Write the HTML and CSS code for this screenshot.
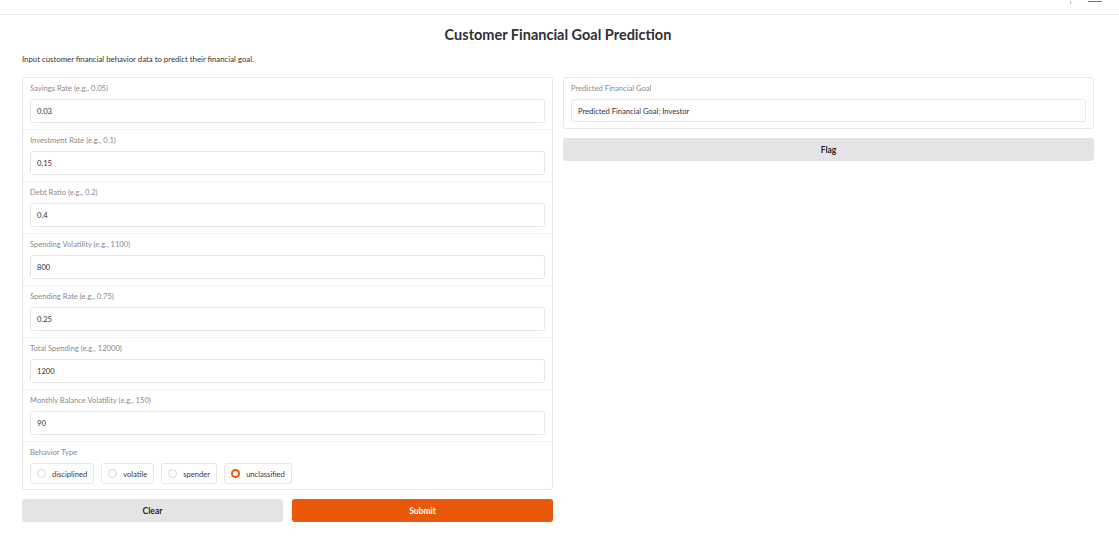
FILE: index.html
```html
<!DOCTYPE html>
<html>
<head>
<meta charset="utf-8">
<link rel="stylesheet" href="styles.css">
</head>
<body>
<div class="topbar">
  <span class="tb-dot"></span>
  <span class="tb-line"></span>
</div>
<div class="app">
  <h1 class="title">Customer Financial Goal Prediction</h1>
  <p class="desc">Input customer financial behavior data to predict their financial goal.</p>
  <div class="cols">
    <div class="col">
      <div class="panel">
        <div class="block"><div class="label">Savings Rate (e.g., 0.05)</div><div class="input">0.03</div></div>
        <div class="block"><div class="label">Investment Rate (e.g., 0.1)</div><div class="input">0.15</div></div>
        <div class="block"><div class="label">Debt Ratio (e.g., 0.2)</div><div class="input">0.4</div></div>
        <div class="block"><div class="label">Spending Volatility (e.g., 1100)</div><div class="input">800</div></div>
        <div class="block"><div class="label">Spending Rate (e.g., 0.75)</div><div class="input">0.25</div></div>
        <div class="block"><div class="label">Total Spending (e.g., 12000)</div><div class="input">1200</div></div>
        <div class="block"><div class="label">Monthly Balance Volatility (e.g., 150)</div><div class="input">90</div></div>
        <div class="block last">
          <div class="label">Behavior Type</div>
          <div class="radios">
            <label class="radio"><span class="dot"></span>disciplined</label>
            <label class="radio"><span class="dot"></span>volatile</label>
            <label class="radio"><span class="dot"></span>spender</label>
            <label class="radio"><span class="dot on"></span>unclassified</label>
          </div>
        </div>
      </div>
      <div class="btnrow">
        <div class="btn secondary">Clear</div>
        <div class="btn primary">Submit</div>
      </div>
    </div>
    <div class="col">
      <div class="panel">
        <div class="block out">
          <div class="label">Predicted Financial Goal</div>
          <div class="output">Predicted Financial Goal: Investor</div>
        </div>
      </div>
      <div class="btn secondary flag">Flag</div>
    </div>
  </div>
</div>
</body>
</html>
```
FILE: styles.css
```css
* { box-sizing: border-box; }
html, body { margin: 0; padding: 0; background: #fff; }
body { font-family: Lato, "Open Sans", sans-serif; color: #27272a; }

.topbar {
  height: 15px;
  border-bottom: 1px solid #ececec;
  display: flex;
  justify-content: flex-end;
  align-items: flex-start;
  gap: 17px;
  padding-right: 17px;
}
.tb-dot { width: 1px; height: 3px; margin-top: 1px; background: #9bbcf0; }
.tb-line { width: 14px; height: 1px; margin-top: 1px; background: #777; }

.app { padding: 0 25px 0 22px; }
.title {
  margin: 0;
  padding-top: 11px;
  height: 28px;
  text-align: center;
  font-size: 14.5px;
  font-weight: 700;
  color: #303036;
  line-height: 18px;
}
.desc {
  margin: 0;
  padding-top: 10px;
  height: 34px;
  font-size: 7.8px;
  line-height: 12px;
  color: #333;
}
.cols { display: grid; grid-template-columns: 1fr 1fr; gap: 10px; }
.col { display: flex; flex-direction: column; gap: 9px; }

.panel {
  border: 1px solid #e6e6e6;
  border-radius: 3px;
  background: #f4f4f5;
  display: flex;
  flex-direction: column;
  gap: 1px;
  overflow: hidden;
}
.block {
  background: #fff;
  padding: 5px 7px 4px 7px;
  height: 51px;
}
.block.last { height: 47px; padding-bottom: 5px; }
.block.out { height: 50px; }
.label {
  font-size: 7.6px;
  line-height: 10px;
  color: #8a8a8f;
  margin-bottom: 6px;
}
.input, .output {
  height: 24px;
  border: 1px solid #e6e6e6;
  border-radius: 3px;
  box-shadow: 0 0 1px rgba(0,0,0,0.04);
  padding: 0 6px;
  font-size: 7.6px;
  line-height: 22px;
  color: #333;
}
.output { height: 23px; }

.radios { display: flex; gap: 7px; }
.radio {
  display: flex;
  align-items: center;
  height: 21px;
  padding: 0 6px;
  border: 1px solid #e6e6e6;
  border-radius: 3px;
  font-size: 7.6px;
  color: #3a3a3a;
  gap: 6px;
}
.dot {
  width: 9px; height: 9px;
  border-radius: 50%;
  border: 1px solid #d6d6da;
  background: #fff;
}
.dot.on { border: 2.5px solid #ea580c; background: #fff; }

.btnrow { display: grid; grid-template-columns: 1fr 1fr; gap: 9px; }
.btn {
  height: 23px;
  border-radius: 3px;
  display: flex;
  align-items: center;
  justify-content: center;
  font-size: 8.5px;
  font-weight: 700;
}
.secondary { background: #e4e4e7; color: #27272a; }
.primary { background: #ea580c; color: #fff; }
```
